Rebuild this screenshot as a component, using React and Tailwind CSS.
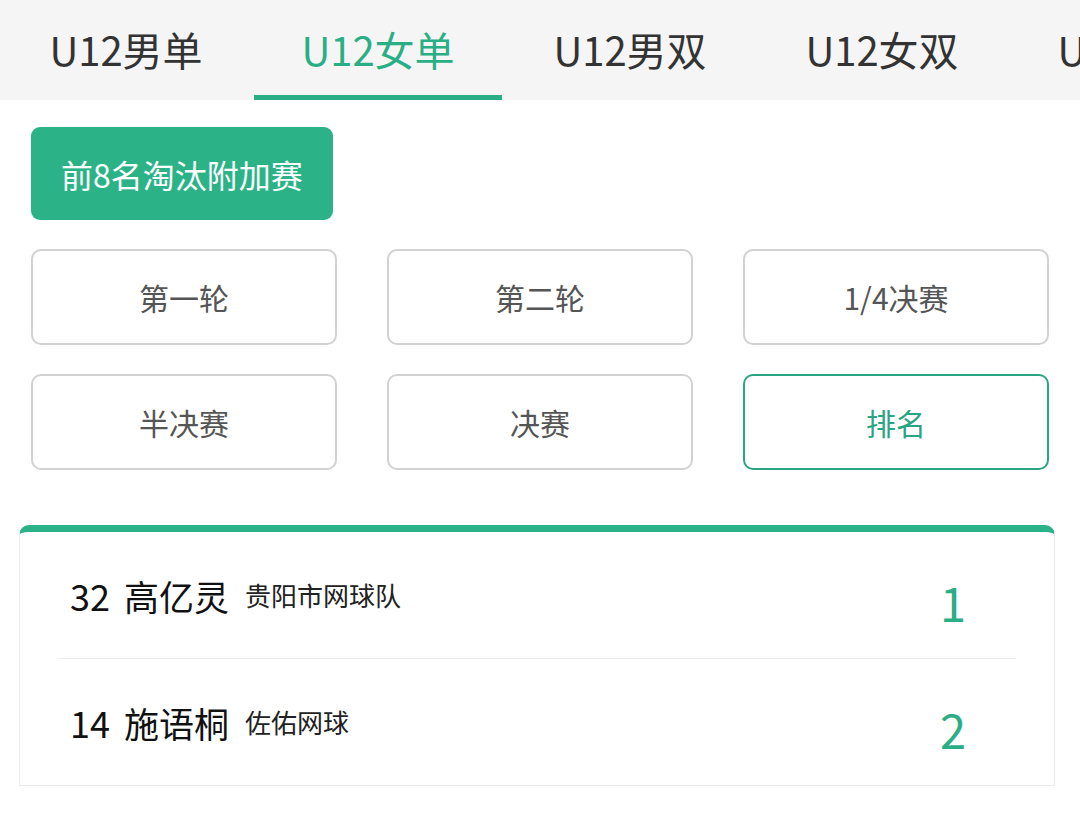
import React, { useState } from 'react';

const tabs = ['U12男单', 'U12女单', 'U12男双', 'U12女双', 'U14男单'];
const rounds = ['第一轮', '第二轮', '1/4决赛', '半决赛', '决赛', '排名'];
const ranking = [
  { no: '32', name: '高亿灵', team: '贵阳市网球队', rank: 1 },
  { no: '14', name: '施语桐', team: '佐佑网球', rank: 2 },
];

const App = () => {
  const [tab, setTab] = useState(1);
  const [round, setRound] = useState(5);

  return (
    <div
      className="w-[1080px] h-[818px] bg-white overflow-hidden"
      style={{ fontFamily: '"Noto Sans CJK SC", "Noto Sans", sans-serif' }}
    >
      {/* tab bar */}
      <div className="flex h-[100px] bg-[#f5f5f5] overflow-hidden">
        {tabs.map((t, i) => (
          <button
            key={t}
            onClick={() => setTab(i)}
            className="relative shrink-0 w-[252px] h-full flex items-center justify-center"
          >
            <span
              className={`text-[40px] leading-none pb-[2px] ${
                tab === i ? 'text-[#2aae85]' : 'text-[#333333]'
              }`}
            >
              {t}
            </span>
            {tab === i && (
              <span className="absolute left-[2px] right-[2px] bottom-0 h-[5px] bg-[#2aae85]" />
            )}
          </button>
        ))}
      </div>

      <div className="px-[31px] pt-[27px]">
        <button className="w-[302px] h-[93px] rounded-[9px] bg-[#2bb387] text-white text-[32px] leading-none">
          前8名淘汰附加赛
        </button>

        <div className="grid grid-cols-3 gap-x-[50px] gap-y-[29px] mt-[29px] w-[1018px]">
          {rounds.map((r, i) => (
            <button
              key={r}
              onClick={() => setRound(i)}
              className={`h-[96px] rounded-[10px] border-2 bg-white text-[30px] leading-none ${
                round === i
                  ? 'border-[#2aa582] text-[#2aa582]'
                  : 'border-[#d2d2d2] text-[#555555]'
              }`}
            >
              {r}
            </button>
          ))}
        </div>
      </div>

      {/* ranking card */}
      <div className="ml-[19px] mt-[55px] w-[1036px] rounded-t-[10px] border-t-[7px] border-[#2bb387] bg-white">
        <div className="border-x border-b border-[#ececec]">
          {ranking.map((p, i) => (
            <div key={p.no}>
              {i > 0 && <div className="mx-[38px] h-px bg-[#ececec]" />}
              <div className="flex items-center h-[126px] pl-[50px] pr-[88px]">
                <span className="text-[36px] leading-none text-[#111111]">{p.no}</span>
                <span className="ml-[14px] text-[35px] leading-none text-[#111111]">{p.name}</span>
                <span className="ml-[16px] text-[26px] leading-none text-[#222222]">{p.team}</span>
                <span className="ml-auto mt-[12px] text-[47px] leading-none text-[#2aae85]">
                  {p.rank}
                </span>
              </div>
            </div>
          ))}
        </div>
      </div>
    </div>
  );
};

export default App;
